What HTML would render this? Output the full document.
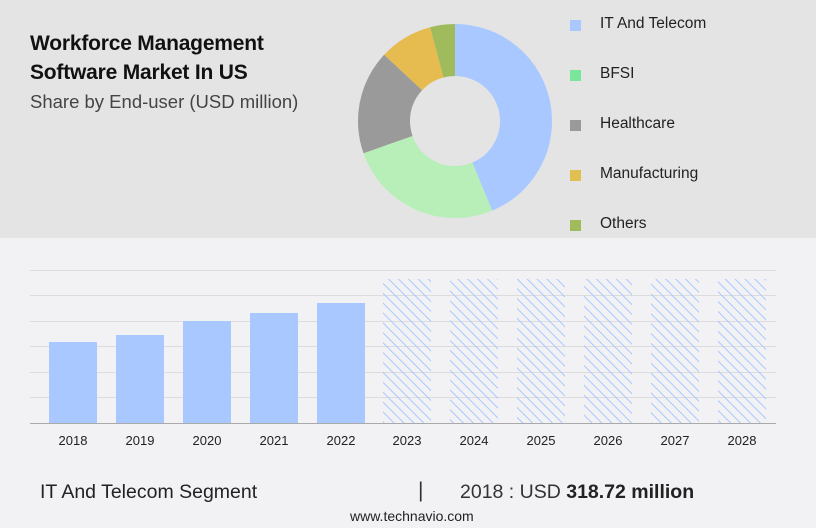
<!DOCTYPE html>
<html><head><meta charset="utf-8"><style>
body{margin:0;width:816px;height:528px;position:relative;background:#f2f2f5;font-family:"Liberation Sans",sans-serif;overflow:hidden}
.top{position:absolute;left:0;top:0;width:816px;height:238px;background:#e4e4e4}
.t{position:absolute;left:30px;top:29px;font-weight:bold;font-size:21px;line-height:29px;color:#111;letter-spacing:-0.2px}
.s{position:absolute;left:30px;top:91px;font-size:18.5px;color:#444}
.lg{position:absolute;left:570px;font-size:15.5px;color:#222}
.lg i{position:absolute;left:0;top:5px;width:11px;height:11px}
.lg span{position:absolute;left:30px;top:0;white-space:nowrap}
.yr{position:absolute;top:433px;font-size:13px;color:#222;width:60px;text-align:center}
</style></head><body>
<div class="top"></div>
<div class="t">Workforce Management<br>Software Market In US</div>
<div class="s">Share by End-user (USD million)</div>
<svg style="position:absolute;left:0;top:0" width="816" height="528">
<g transform="rotate(-90 455 121)" fill="none" stroke-width="52">
<circle cx="455" cy="121" r="71" stroke="#a8c8ff" stroke-dasharray="195 446.1"/>
<circle cx="455" cy="121" r="71" stroke="#b8efb8" stroke-dasharray="0 195 115.4 446.1"/>
<circle cx="455" cy="121" r="71" stroke="#9a9a9a" stroke-dasharray="0 310.4 77.4 446.1"/>
<circle cx="455" cy="121" r="71" stroke="#e6bb50" stroke-dasharray="0 387.8 39.7 446.1"/>
<circle cx="455" cy="121" r="71" stroke="#a0bb5c" stroke-dasharray="0 427.5 18.6 446.1"/>
</g>
<defs><pattern id="h" width="7" height="7" patternUnits="userSpaceOnUse" patternTransform="rotate(-45)"><line x1="0" y1="0" x2="0" y2="7" stroke="#a8c8ff" stroke-width="2"/></pattern></defs>
<g stroke="#dcdcdf" stroke-width="1">
<line x1="30" x2="776" y1="270.5" y2="270.5"/><line x1="30" x2="776" y1="295.5" y2="295.5"/><line x1="30" x2="776" y1="321.5" y2="321.5"/><line x1="30" x2="776" y1="346.5" y2="346.5"/><line x1="30" x2="776" y1="372.5" y2="372.5"/><line x1="30" x2="776" y1="397.5" y2="397.5"/>
</g>
<g fill="#a8c8ff">
<rect x="49" y="342" width="48" height="81"/><rect x="116" y="335" width="48" height="88"/><rect x="183" y="321" width="48" height="102"/><rect x="250" y="313" width="48" height="110"/><rect x="317" y="303" width="48" height="120"/>
</g>
<g fill="url(#h)">
<rect x="383" y="279" width="48" height="144"/><rect x="450" y="279" width="48" height="144"/><rect x="517" y="279" width="48" height="144"/><rect x="584" y="279" width="48" height="144"/><rect x="651" y="279" width="48" height="144"/><rect x="718" y="279" width="48" height="144"/>
</g>
<line x1="30" x2="776" y1="423.5" y2="423.5" stroke="#aaa"/>
</svg>
<div class="lg" style="top:15px"><i style="background:#a8c8ff"></i><span>IT And Telecom</span></div>
<div class="lg" style="top:65px"><i style="background:#7ae69a"></i><span>BFSI</span></div>
<div class="lg" style="top:115px"><i style="background:#9a9a9a"></i><span>Healthcare</span></div>
<div class="lg" style="top:165px"><i style="background:#e0c050"></i><span>Manufacturing</span></div>
<div class="lg" style="top:215px"><i style="background:#a0bb5c"></i><span>Others</span></div>
<div class="yr" style="left:43px">2018</div><div class="yr" style="left:110px">2019</div><div class="yr" style="left:177px">2020</div><div class="yr" style="left:244px">2021</div><div class="yr" style="left:311px">2022</div><div class="yr" style="left:377px">2023</div><div class="yr" style="left:444px">2024</div><div class="yr" style="left:511px">2025</div><div class="yr" style="left:578px">2026</div><div class="yr" style="left:645px">2027</div><div class="yr" style="left:712px">2028</div>
<div style="position:absolute;left:40px;top:481px;font-size:19.5px;color:#222">IT And Telecom Segment</div>
<div style="position:absolute;left:418px;top:479px;font-size:21px;color:#333">|</div>
<div style="position:absolute;left:460px;top:481px;font-size:19.5px;color:#333">2018 : USD <b style="color:#222">318.72 million</b></div>
<div style="position:absolute;left:350px;top:508px;font-size:14px;color:#222">www.technavio.com</div>
</body></html>
